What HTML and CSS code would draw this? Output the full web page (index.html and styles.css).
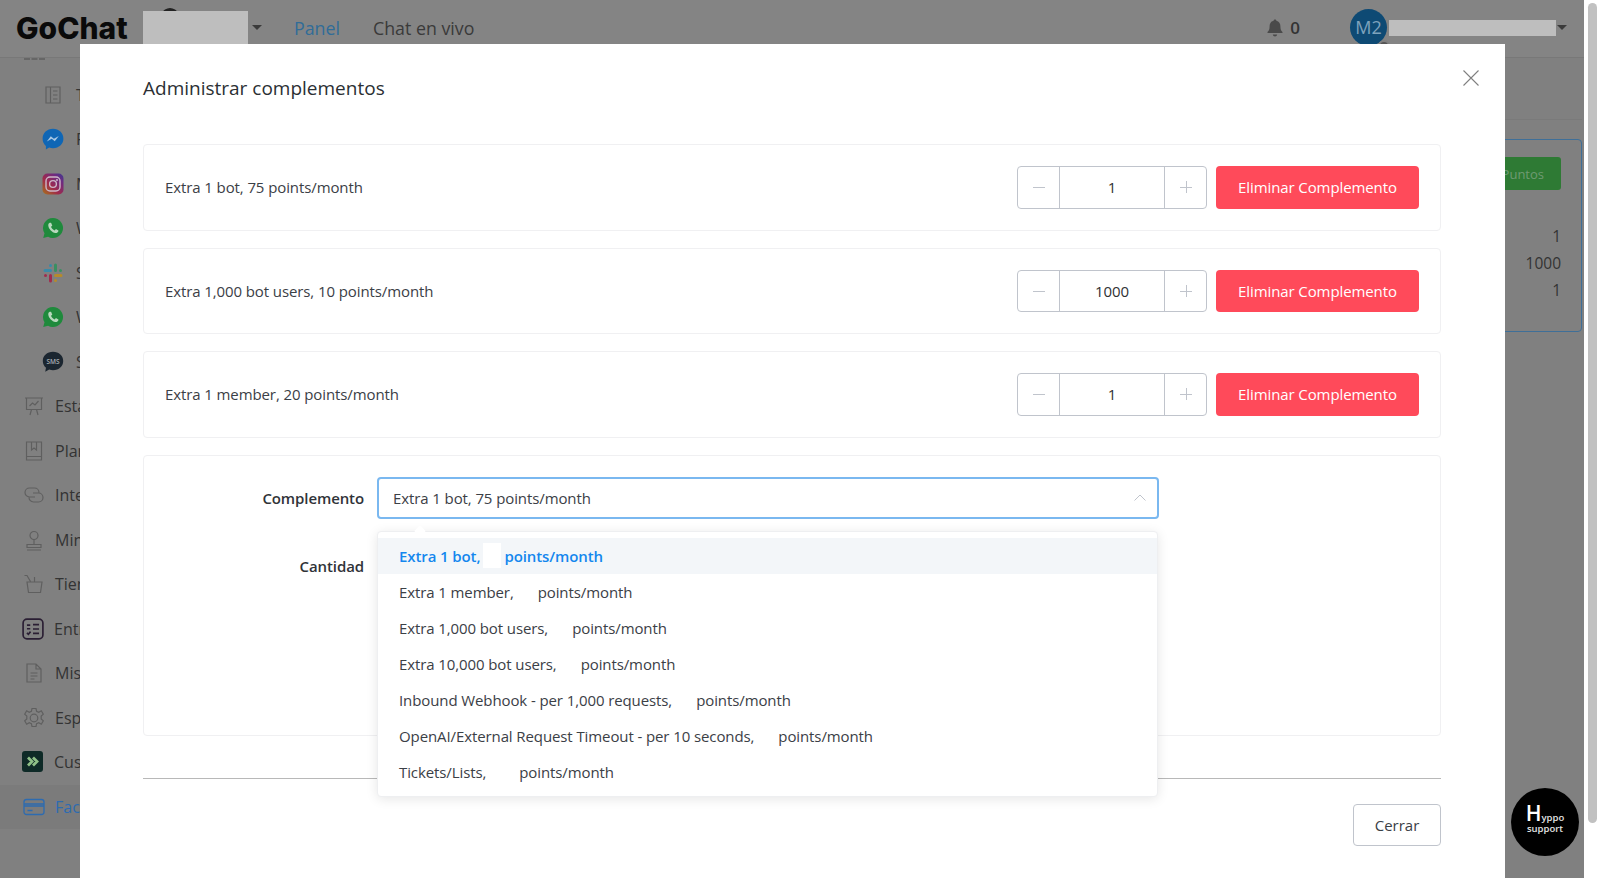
FILE: index.html
```html
<!DOCTYPE html>
<html lang="es">

<head>
    <meta charset="UTF-8">
    <meta name="viewport" content="width=device-width, initial-scale=1.0">
    <title>Administrar complementos</title>
    <link rel="stylesheet" href="styles.css">
</head>

<body>
    <div class="page">

        <!-- Top bar -->
        <header class="topbar">
            <div class="logo">GoChat</div>
            <div class="workspace">
                <span class="workspace-avatar"></span>
                <span class="redacted workspace-name"></span>
            </div>
            <span class="caret"></span>
            <a class="top-link active" href="#">Panel</a>
            <a class="top-link" href="#">Chat en vivo</a>
            <div class="top-right">
                <svg class="bell" viewBox="0 0 20 20" width="20" height="20">
                    <path fill="#4a4a4a" d="M10 1.5c.8 0 1.3.5 1.4 1.3 2.6.6 4 2.7 4 5.4 0 3 .6 4.4 2.1 5.9v1H2.500v-1C4 12.600 4.600 11.200 4.600 8.200c0-2.700 1.400-4.800 4-5.400.1-.8.600-1.300 1.400-1.300zM7.800 16.400h4.400c-.2 1.200-1.100 2-2.200 2s-2-.8-2.200-2z" />
                </svg>
                <span class="bell-count">0</span>
                <div class="user-avatar">M2<span class="status-dot"></span></div>
                <span class="redacted user-name"></span>
                <span class="caret"></span>
            </div>
        </header>

        <div class="layout">
            <!-- Sidebar -->
            <nav class="sidebar">
                <div class="nav-more"></div>

                <a class="nav-item sub" href="#">
                    <svg viewBox="0 0 22 22" class="nav-icon line">
                        <path d="M4 3h14v16H4zM8.500 3v16M11 7h4.500M11 11h4.500M11 15h4.500" />
                    </svg>
                    <span>Telegram</span>
                </a>
                <a class="nav-item sub" href="#">
                    <svg viewBox="0 0 22 22" class="nav-icon">
                        <path fill="#0f66b5" d="M11 .8C5 .8.600 5.100.600 10.700c0 3 1.200 5.500 3.300 7.200v3.500l3.200-1.800c1.200.4 2.500.6 3.900.6 6 0 10.400-4.300 10.400-9.500C21.400 5.100 17 .8 11 .8z" />
                        <path fill="#a9c8e4" d="M4.800 13.500l4-5.200 3.100 2.400 4.900-2.700-4 5.200-3.100-2.400z" />
                    </svg>
                    <span>Facebook</span>
                </a>
                <a class="nav-item sub" href="#">
                    <svg viewBox="0 0 22 22" class="nav-icon">
                        <defs>
                            <linearGradient id="ig" x1="0" y1="1" x2="1" y2="0">
                                <stop offset="0" stop-color="#a8741c" />
                                <stop offset=".4" stop-color="#a02a4a" />
                                <stop offset=".75" stop-color="#702a80" />
                                <stop offset="1" stop-color="#3c3a90" />
                            </linearGradient>
                        </defs>
                        <rect x=".5" y=".5" width="21" height="21" rx="5" fill="url(#ig)" />
                        <rect x="4" y="4" width="14" height="14" rx="4" fill="none" stroke="#cdb8c8" stroke-width="1.400" />
                        <circle cx="11" cy="11" r="3.400" fill="none" stroke="#cdb8c8" stroke-width="1.400" />
                        <circle cx="15" cy="7" r="1" fill="#cdb8c8" />
                    </svg>
                    <span>Messenger</span>
                </a>
                <a class="nav-item sub" href="#">
                    <svg viewBox="0 0 22 22" class="nav-icon">
                        <path fill="#1f8a3c" d="M11 1a10 10 0 0 0-8.500 15.200L1.200 21l4.900-1.300A10 10 0 1 0 11 1z" />
                        <path fill="#b8d8bd" d="M7.700 5.800c-.9.500-1.600 1.500-1.400 2.900.4 3.200 3.800 6.800 7 7.300 1.500.2 2.600-.5 3-1.500.2-.6.200-1 .1-1.100l-2.500-1.300-1.200 1.400c-1.700-.7-3-2-3.700-3.700l1.300-1.100-1.100-2.700c-.4-.4-1-.4-1.500-.2z" />
                    </svg>
                    <span>WhatsApp</span>
                </a>
                <a class="nav-item sub" href="#">
                    <svg viewBox="0 0 22 22" class="nav-icon slack">
                        <path stroke="#3a8aa8" d="M3 8.500h5.500M8.500 3.500h.01" />
                        <path stroke="#3a8f62" d="M13.500 3v5.500M18.500 8.500h.01" />
                        <path stroke="#b58a2c" d="M13.500 13.500H19M13.500 18.500h.01" />
                        <path stroke="#a02c4e" d="M8.500 13.500V19M3.500 13.500h.01" />
                    </svg>
                    <span>Slack</span>
                </a>
                <a class="nav-item sub" href="#">
                    <svg viewBox="0 0 22 22" class="nav-icon">
                        <path fill="#1f8a3c" d="M11 1a10 10 0 0 0-8.500 15.200L1.200 21l4.900-1.300A10 10 0 1 0 11 1z" />
                        <path fill="#b8d8bd" d="M7.700 5.800c-.9.500-1.600 1.500-1.400 2.900.4 3.200 3.800 6.800 7 7.300 1.500.2 2.600-.5 3-1.500.2-.6.200-1 .1-1.100l-2.500-1.300-1.200 1.400c-1.700-.7-3-2-3.700-3.700l1.300-1.100-1.100-2.700c-.4-.4-1-.4-1.500-.2z" />
                    </svg>
                    <span>WhatsApp Cloud</span>
                </a>
                <a class="nav-item sub" href="#">
                    <svg viewBox="0 0 22 22" class="nav-icon">
                        <path fill="#1b2630" d="M11 .8C5 .8.800 4.800.800 10c0 2.800 1.200 5.200 3.200 6.800l-.8 4 4-2.200c1.200.4 2.500.6 3.800.6 6 0 10.200-4 10.200-9.200S17 .8 11 .8z" />
                        <text x="11" y="12.600" class="sms-text">SMS</text>
                    </svg>
                    <span>SMS</span>
                </a>

                <a class="nav-item" href="#">
                    <svg viewBox="0 0 22 22" class="nav-icon line">
                        <path d="M2 3h18M3.500 3v11.500h15V3M7 20l1.500-5.500M15 20l-1.500-5.500M6.500 11l3-3 2.500 2 3.500-4" />
                    </svg>
                    <span>Estadísticas</span>
                </a>
                <a class="nav-item" href="#">
                    <svg viewBox="0 0 22 22" class="nav-icon line">
                        <path d="M3.500 2h15v18h-15zM3.500 16.500h15M8.500 2v8l2.500-2 2.500 2V2" />
                    </svg>
                    <span>Planes</span>
                </a>
                <a class="nav-item" href="#">
                    <svg viewBox="0 0 22 22" class="nav-icon line">
                        <path d="M12 13H6.500a4.500 4.500 0 0 1 0-9h5a4.500 4.500 0 0 1 4.500 4.500M10 9h5.500a4.500 4.500 0 0 1 0 9h-5A4.500 4.500 0 0 1 6 13.500" />
                    </svg>
                    <span>Integraciones</span>
                </a>
                <a class="nav-item" href="#">
                    <svg viewBox="0 0 22 22" class="nav-icon line">
                        <circle cx="11" cy="6.500" r="4" />
                        <path d="M11 10.500v5M4 15.500h14v3H4zM4 21h14" />
                    </svg>
                    <span>Miniapps</span>
                </a>
                <a class="nav-item" href="#">
                    <svg viewBox="0 0 22 22" class="nav-icon line">
                        <path d="M1.500 2.500h2.500l3.500 6M4 9h15l-1.500 10.500h-12zM11.500 9V4" />
                    </svg>
                    <span>Tienda</span>
                </a>
                <a class="nav-item bold-icon" href="#">
                    <svg viewBox="0 0 20 20" class="nav-icon">
                        <rect x="1" y="1" width="18" height="18" rx="3.500" fill="none" stroke="#2a1e33" stroke-width="1.500" />
                        <path fill="none" stroke="#2a1e33" stroke-width="1.500" d="M4.500 6.500h3M10 6h5.500M10 10h5.500M10 14h5.500M4.500 13.500l1.300 1.300 2-2.400M4.500 9.800h3" />
                    </svg>
                    <span>Entradas</span>
                </a>
                <a class="nav-item" href="#">
                    <svg viewBox="0 0 22 22" class="nav-icon line">
                        <path d="M4 2h9l5 5v13H4zM13 2v5h5M7.500 11h7M7.500 14h7M7.500 17h4" />
                    </svg>
                    <span>Mis archivos</span>
                </a>
                <a class="nav-item" href="#">
                    <svg viewBox="0 0 22 22" class="nav-icon line">
                        <circle cx="11" cy="11" r="3.800" />
                        <path d="M9 1.500h4l.6 2.800 2.200 1 2.500-1.500 2 3.400-2.100 1.900v2.800l2.100 1.900-2 3.400-2.500-1.500-2.200 1-.6 2.800H9l-.6-2.800-2.200-1-2.500 1.500-2-3.400 2.100-1.900V9.100L1.700 7.200l2-3.400 2.500 1.500 2.200-1z" />
                    </svg>
                    <span>Espacio</span>
                </a>
                <a class="nav-item bold-icon" href="#">
                    <svg viewBox="0 0 22 22" class="nav-icon">
                        <rect width="21" height="21" rx="3" fill="#0e2a27" />
                        <path fill="none" stroke="#8fc088" stroke-width="2.800" d="M6 6.500l4 4-4 4M11 6.500l4 4-4 4" />
                    </svg>
                    <span>Customer</span>
                </a>
                <a class="nav-item active" href="#">
                    <svg viewBox="0 0 22 22" class="nav-icon line blue">
                        <rect x="1" y="3.500" width="20" height="15" rx="2.500" />
                        <path d="M1 8h20M1 10h20M4.500 14.500h5" />
                    </svg>
                    <span>Facturación</span>
                </a>
            </nav>

            <!-- Main content, mostly behind the modal -->
            <main class="content">
                <div class="content-head"></div>
                <section class="addons-box">
                    <div class="addons-action">
                        <button class="points-btn">Comprar Puntos</button>
                    </div>
                    <div class="addons-row">1</div>
                    <div class="addons-row">1000</div>
                    <div class="addons-row">1</div>
                </section>
            </main>
        </div>

        <!-- Modal -->
        <div class="modal">
            <svg class="modal-close" viewBox="0 0 16 16" width="16" height="16">
                <path d="M.5.5l15 15M15.500.5l-15 15" />
            </svg>
            <h2 class="modal-title">Administrar complementos</h2>

            <div class="addon-card">
                <span>Extra 1 bot, 75 points/month</span>
                <div class="addon-actions">
                    <div class="stepper">
                        <span class="step-btn minus"></span>
                        <span class="step-value">1</span>
                        <span class="step-btn plus"></span>
                    </div>
                    <button class="delete-btn">Eliminar Complemento</button>
                </div>
            </div>

            <div class="addon-card">
                <span>Extra 1,000 bot users, 10 points/month</span>
                <div class="addon-actions">
                    <div class="stepper">
                        <span class="step-btn minus"></span>
                        <span class="step-value">1000</span>
                        <span class="step-btn plus"></span>
                    </div>
                    <button class="delete-btn">Eliminar Complemento</button>
                </div>
            </div>

            <div class="addon-card">
                <span>Extra 1 member, 20 points/month</span>
                <div class="addon-actions">
                    <div class="stepper">
                        <span class="step-btn minus"></span>
                        <span class="step-value">1</span>
                        <span class="step-btn plus"></span>
                    </div>
                    <button class="delete-btn">Eliminar Complemento</button>
                </div>
            </div>

            <div class="add-card">
                <div class="form-row">
                    <label class="form-label">Complemento</label>
                    <div class="select-wrap">
                        <div class="select-box">
                            <span>Extra 1 bot, 75 points/month</span>
                            <svg viewBox="0 0 12 7" width="12" height="7">
                                <path d="M.5 6.500L6 1l5.500 5.500" />
                            </svg>
                        </div>
                        <ul class="dropdown">
                            <li class="selected">Extra 1 bot,<span class="blank"></span>points/month</li>
                            <li>Extra 1 member,<span class="blank"></span>points/month</li>
                            <li>Extra 1,000 bot users,<span class="blank"></span>points/month</li>
                            <li>Extra 10,000 bot users,<span class="blank"></span>points/month</li>
                            <li>Inbound Webhook - per 1,000 requests,<span class="blank"></span>points/month</li>
                            <li>OpenAI/External Request Timeout - per 10 seconds,<span class="blank"></span>points/month</li>
                            <li>Tickets/Lists,<span class="blank wide"></span>points/month</li>
                        </ul>
                    </div>
                </div>
                <div class="form-row">
                    <label class="form-label">Cantidad</label>
                </div>
            </div>

            <div class="modal-footer">
                <button class="close-btn">Cerrar</button>
            </div>
        </div>

        <!-- Support bubble -->
        <div class="support">
            <div class="support-brand"><b>H</b><span>yppo</span></div>
            <div>support</div>
        </div>
    </div>

    <!-- Page scrollbar -->
    <div class="scrollbar">
        <div class="scrollbar-thumb"></div>
    </div>
</body>

</html>
```

FILE: styles.css
```css
/* Global Styles */
* {
    box-sizing: border-box;
}

body {
    margin: 0;
    height: 100vh;
    display: flex;
    overflow: hidden;
    font-family: 'Open Sans', sans-serif;
    background-color: white;
    color: #3b4046;
}

/* The page behind the modal is painted in its dimmed colours */
.page {
    flex: 1;
    position: relative;
    overflow: hidden;
    background-color: #808080;
}

.redacted {
    display: block;
    background-color: #bebebe;
}

.caret {
    width: 0;
    height: 0;
    border-left: 5px solid transparent;
    border-right: 5px solid transparent;
    border-top: 5px solid #3a3a3a;
}

/* Top bar */
.topbar {
    height: 58px;
    display: flex;
    align-items: center;
    padding-left: 16px;
    padding-bottom: 2px;
    border-bottom: 1px solid #787878;
    background-color: #848484;
}

.logo {
    width: 127px;
    font-family: 'Inter', sans-serif;
    font-size: 30px;
    font-weight: 800;
    color: #0a0a0a;
}

.workspace {
    position: relative;
    width: 105px;
    height: 33px;
}

.workspace-avatar {
    position: absolute;
    left: 14px;
    top: -3px;
    width: 26px;
    height: 40px;
    border-radius: 50%;
    background-color: #222;
}

.workspace-name {
    position: relative;
    height: 33px;
}

.workspace + .caret {
    margin-left: 4px;
}

.top-link {
    margin-left: 33px;
    font-size: 17.800px;
    font-weight: 500;
    text-decoration: none;
    color: #3a3a3a;
}

.top-link.active {
    margin-left: 32px;
    color: #306c98;
}

.top-right {
    margin-left: auto;
    display: flex;
    align-items: center;
    padding-right: 17px;
}

.bell-count {
    margin-left: 5px;
    font-size: 17px;
    font-weight: 600;
    color: #333;
}

.user-avatar {
    position: relative;
    margin-left: 50px;
    width: 37px;
    height: 37px;
    border-radius: 50%;
    background-color: #0e4a74;
    color: #7ea2bc;
    font-size: 18px;
    line-height: 37px;
    text-align: center;
}

.status-dot {
    position: absolute;
    right: -3px;
    bottom: -6px;
    width: 12px;
    height: 12px;
    border-radius: 50%;
    background-color: #555;
    border: 2px solid #808080;
}

.user-name {
    width: 167px;
    height: 16px;
    margin-left: 2px;
}

.user-name + .caret {
    margin-left: 1px;
}

/* Sidebar */
.layout {
    display: flex;
}

.sidebar {
    width: 270px;
    flex-shrink: 0;
}

.nav-more {
    width: 21px;
    height: 14.500px;
    margin-left: 24px;
    border-top: 2px dashed #666;
}

.nav-item {
    height: 44.500px;
    display: flex;
    align-items: center;
    gap: 10px;
    padding-left: 23px;
    font-size: 16px;
    text-decoration: none;
    color: #333;
}

.nav-item.sub {
    gap: 12px;
    padding-left: 42px;
}

.nav-item.bold-icon {
    padding-left: 22px;
}

.nav-item.active {
    background-color: #7b7b7b;
    color: #2d6bb0;
}

.nav-icon {
    width: 22px;
    height: 22px;
    flex-shrink: 0;
}

.nav-icon.line {
    fill: none;
    stroke: #5f5f5f;
    stroke-width: 1.2;
}

.nav-icon.line.blue {
    stroke: #2d6bb0;
    stroke-width: 1.3;
}

.nav-icon.slack {
    fill: none;
    stroke-width: 3;
    stroke-linecap: round;
}

.sms-text {
    font-size: 6.500px;
    font-weight: 600;
    text-anchor: middle;
    fill: #a8b0b6;
}

/* Content behind the modal */
.content {
    flex: 1;
    padding-right: 2px;
}

.content-head {
    height: 62px;
    border-bottom: 1px solid #7a7a7a;
}

.addons-box {
    height: 193px;
    margin-top: 19px;
    padding: 17px 20px;
    border: 1px solid #3f6f98;
    border-radius: 4px;
    font-size: 15.500px;
    color: #333;
}

.addons-action {
    display: flex;
    justify-content: flex-end;
    margin-bottom: 33px;
}

.points-btn {
    height: 33px;
    padding: 0 17px;
    border: none;
    border-radius: 3px;
    background-color: #2e7a34;
    color: #6f9a72;
    font-family: inherit;
    font-size: 13px;
}

.addons-row {
    height: 27px;
    line-height: 27px;
    text-align: right;
}

/* Modal */
.modal {
    position: absolute;
    left: 80px;
    top: 44px;
    width: 1425px;
    height: 834px;
    padding: 30px 64px 0 63px;
    background-color: white;
    letter-spacing: -0.1px;
}

.modal-close {
    position: absolute;
    top: 26px;
    right: 26px;
    fill: none;
    stroke: #7f7f7f;
    stroke-width: 1.1;
}

.modal-title {
    margin: 0 0 42px;
    font-size: 19px;
    font-weight: 400;
    line-height: 28px;
    letter-spacing: 0;
    color: #2b2f33;
}

.addon-card {
    height: 86.500px;
    margin-bottom: 17px;
    padding: 0 21px;
    display: flex;
    align-items: center;
    justify-content: space-between;
    border: 1px solid #f0f0f2;
    border-radius: 4px;
    font-size: 15px;
}

.addon-actions {
    display: flex;
    gap: 9px;
}

.stepper {
    width: 190px;
    height: 42.500px;
    display: flex;
    border: 1px solid #c0c4cc;
    border-radius: 4px;
}

.step-btn {
    position: relative;
    width: 42px;
    flex-shrink: 0;
}

.step-btn.minus {
    border-right: 1px solid #c0c4cc;
}

.step-btn.plus {
    border-left: 1px solid #c0c4cc;
}

.step-btn::before,
.step-btn.plus::after {
    content: "";
    position: absolute;
    left: 15px;
    top: 20px;
    width: 12px;
    height: 1px;
    background-color: #c0c4cc;
}

.step-btn.plus::after {
    left: 21px;
    top: 14px;
    width: 1px;
    height: 12px;
}

.step-value {
    flex: 1;
    line-height: 40px;
    text-align: center;
    font-size: 15px;
    color: #303133;
}

.delete-btn {
    width: 203px;
    height: 42.500px;
    border: none;
    border-radius: 4px;
    background-color: #ff4a5a;
    color: white;
    font-family: inherit;
    font-size: 15px;
    letter-spacing: -0.1px;
}

/* Add form */
.add-card {
    height: 281px;
    padding: 21px 0;
    border: 1px solid #f0f0f2;
    border-radius: 4px;
}

.form-row {
    display: flex;
    gap: 13px;
    margin-bottom: 26px;
}

.form-label {
    width: 220px;
    line-height: 42px;
    text-align: right;
    font-size: 15px;
    font-weight: 600;
    color: #303338;
}

.select-wrap {
    position: relative;
    width: 782px;
}

.select-box {
    height: 42px;
    padding: 0 11px 0 14px;
    display: flex;
    align-items: center;
    justify-content: space-between;
    border: 2px solid #7ab8f0;
    border-radius: 4px;
    font-size: 15px;
}

.select-box svg {
    fill: none;
    stroke: #c0c4cc;
}

.dropdown {
    position: absolute;
    z-index: 2;
    top: 54px;
    left: 0;
    width: 781px;
    margin: 0;
    padding: 6px 0;
    list-style: none;
    background-color: white;
    border: 1px solid #eeeff1;
    border-radius: 4px;
    box-shadow: 0 2px 12px rgba(0, 0, 0, 0.1);
    font-size: 15px;
}

.dropdown::before {
    content: "";
    position: absolute;
    top: -5px;
    left: 38px;
    width: 8px;
    height: 8px;
    background-color: white;
    transform: rotate(45deg);
}

.dropdown li {
    position: relative;
    height: 36px;
    padding-left: 21px;
    display: flex;
    align-items: center;
}

.dropdown li.selected {
    background-color: #f3f6f9;
    color: #1487ee;
    font-weight: 600;
}

.blank {
    width: 18px;
    height: 25px;
    margin: 0 3px;
    background-color: white;
}

.blank.wide {
    width: 27px;
}

.modal-footer {
    margin-top: 42px;
    padding-top: 25px;
    display: flex;
    justify-content: flex-end;
    border-top: 1px solid #b8b8b8;
}

.close-btn {
    width: 88px;
    height: 42px;
    border: 1px solid #c0c4cc;
    border-radius: 4px;
    background-color: white;
    color: #3b4046;
    font-family: inherit;
    font-size: 15px;
}

/* Support bubble */
.support {
    position: absolute;
    left: 1511px;
    top: 788px;
    width: 68px;
    height: 68px;
    padding-top: 16px;
    border-radius: 50%;
    background-color: black;
    color: #e4e4e4;
    font-size: 9.500px;
    font-weight: 600;
    line-height: 11px;
    text-align: center;
}

.support-brand {
    display: flex;
    justify-content: center;
    align-items: flex-end;
    height: 19px;
}

.support-brand b {
    font-size: 21px;
    font-weight: 600;
    line-height: 19px;
    color: white;
}

/* Scrollbar */
.scrollbar {
    width: 16px;
    padding: 3px 3px 55px 4px;
    display: flex;
}

.scrollbar-thumb {
    flex: 1;
    border-radius: 5px;
    background-color: #c1c1c1;
}
```
